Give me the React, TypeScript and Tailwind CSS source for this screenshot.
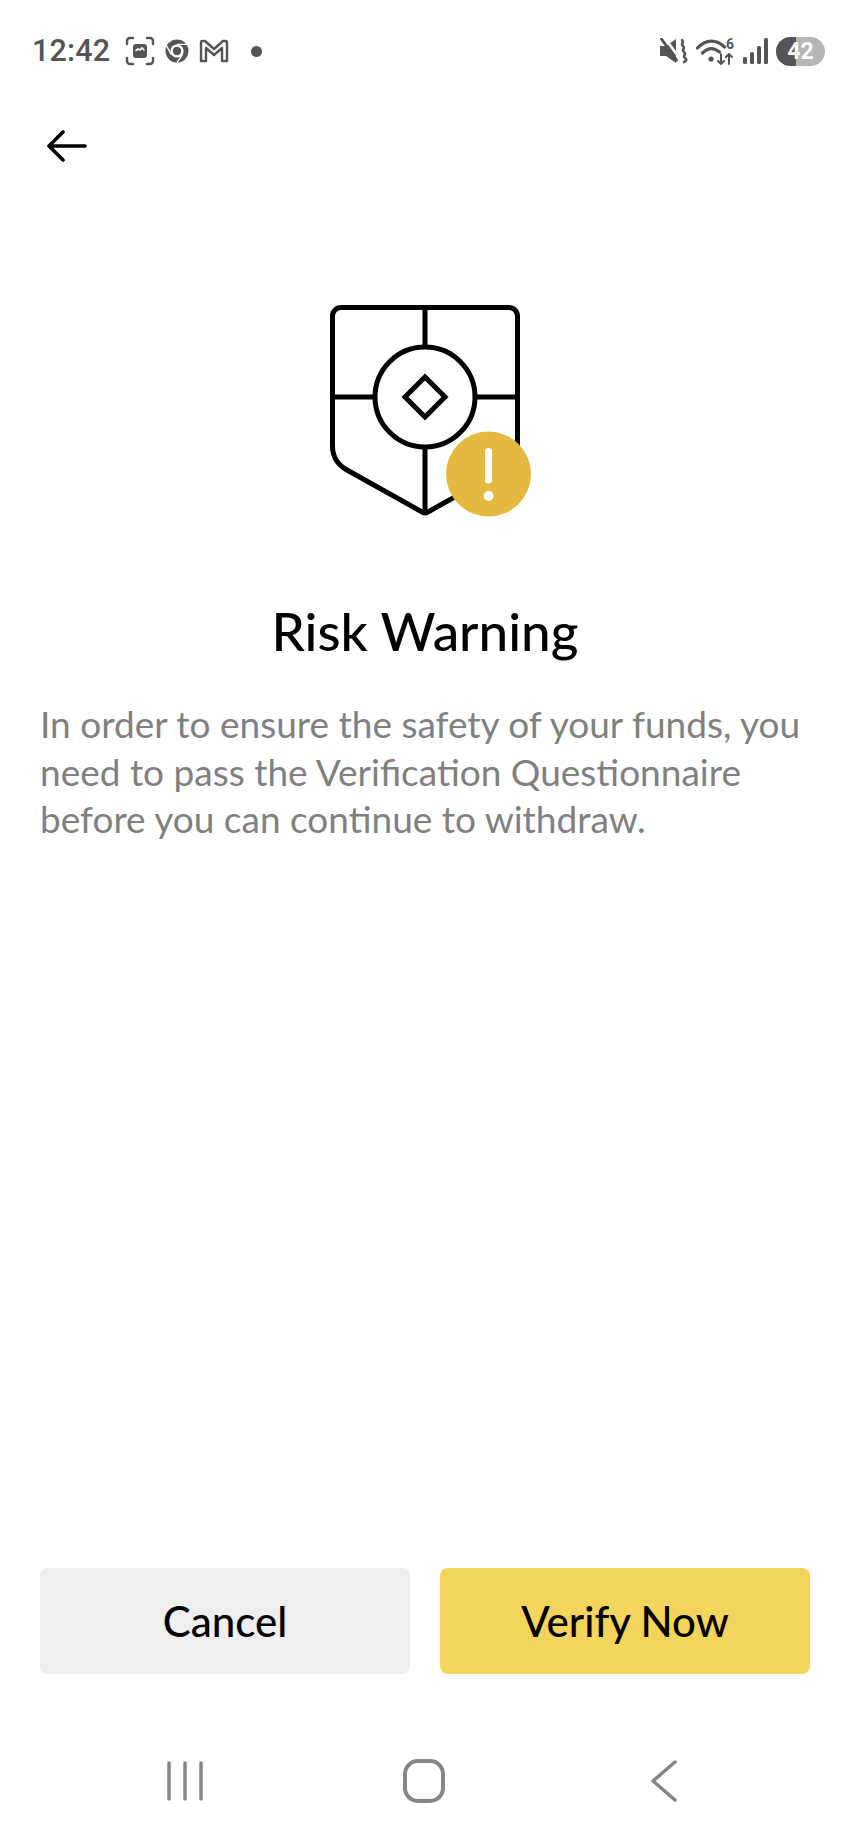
import React from 'react';

const sans = 'font-["Lato","Noto_Sans",sans-serif]';

const StatusBar: React.FC = () => (
  <div className="h-[102px] flex items-center pl-[32px] pr-[25px] text-[#555555] shrink-0">
    <span className='font-["Roboto",sans-serif] font-medium text-[30.500px] leading-none w-[78px] tracking-[0.2px]'>12:42</span>
    {/* screenshot */}
    <svg className="ml-[15px]" width="30" height="30" viewBox="0 0 30 30" fill="none" stroke="#555555" strokeWidth="2.400" strokeLinecap="round">
      <path d="M2 8V5a3 3 0 0 1 3-3h3M22 2h3a3 3 0 0 1 3 3v3M28 22v3a3 3 0 0 1-3 3h-3M8 28H5a3 3 0 0 1-3-3v-3" />
      <rect x="8" y="8" width="14" height="14" rx="3" fill="#555555" stroke="none" />
      <path d="M11 14.500l2-1.500 2 1 2-2 2 2" stroke="#ffffff" strokeWidth="1.600" />
    </svg>
    {/* chrome */}
    <svg className="ml-[10px]" width="24" height="24" viewBox="0 0 24 24">
      <circle cx="12" cy="12" r="11.500" fill="#555555" />
      <circle cx="12" cy="12" r="6.600" fill="#ffffff" />
      <circle cx="12" cy="12" r="4.200" fill="#555555" />
      <path d="M12 5.400h10M6.300 15.300L1.600 7M17.700 15.300L12 23.600" stroke="#ffffff" strokeWidth="1.400" />
    </svg>
    {/* gmail */}
    <svg className="ml-[10px]" width="30" height="24" viewBox="0 0 30 24" fill="none" stroke="#555555" strokeWidth="2.400" strokeLinejoin="round">
      <path d="M2 22V3.500Q2 2 3.500 2H6L15 10 24 2h2.500Q28 2 28 3.500V22h-5V9l-8 7-8-7v13z" />
    </svg>
    <span className="ml-[22px] w-[11px] h-[11px] rounded-full bg-[#555555]" />

    <div className="ml-auto flex items-center">
      {/* muted speaker */}
      <svg width="28" height="26" viewBox="0 0 28 26" fill="none">
        <path d="M0 8h6l10-7v24l-10-7H0z" fill="#555555" />
        <path d="M5 0l15 21" stroke="#ffffff" strokeWidth="2.600" />
        <path d="M1.500 1l15 21" stroke="#555555" strokeWidth="3" strokeLinecap="round" />
        <path d="M22 2c3 2-2 4 1 6s-2 4 1 6-2 4 1 6 0 3-1 4" stroke="#555555" strokeWidth="2.600" strokeLinecap="round" />
      </svg>
      {/* wifi */}
      <div className="relative ml-[8px] w-[38px] h-[28px]">
        <svg width="38" height="28" viewBox="0 0 38 28" fill="none" stroke="#555555" strokeLinecap="round">
          <path d="M1.500 11C10 2 20 2 28.500 10" strokeWidth="3.200" />
          <path d="M6.500 16C12 10.500 18 10.500 23.500 15" strokeWidth="3.200" />
          <circle cx="15" cy="22" r="2.600" fill="#555555" stroke="none" />
          <path d="M25 17v10M22 24l3 3 3-3M33 27V17M30 20l3-3 3 3" strokeWidth="2" />
        </svg>
        <span className='absolute right-0 top-0 font-["Roboto",sans-serif] font-bold text-[14px] leading-[14px] text-[#555555]'>6</span>
      </div>
      {/* signal */}
      <svg className="ml-[9px]" width="25" height="26" viewBox="0 0 25 26" fill="#555555">
        <rect x="0" y="19" width="4" height="7" rx="1.500" />
        <rect x="7" y="14" width="4" height="12" rx="1.500" />
        <rect x="14" y="8" width="4" height="18" rx="1.500" />
        <rect x="21" y="0" width="4" height="26" rx="1.500" />
      </svg>
      {/* battery */}
      <div className="relative ml-[8px] w-[49px] h-[29px] rounded-full overflow-hidden bg-[#b5b5b5] flex items-center justify-center">
        <span className="absolute left-0 top-0 h-full w-[20px] bg-[#555555]" />
        <span className='relative font-["Roboto",sans-serif] font-bold text-[23px] leading-none text-white'>42</span>
      </div>
    </div>
  </div>
);

const ShieldIllustration: React.FC = () => (
  <svg width="230" height="220" viewBox="0 0 230 220" fill="none" className="mx-auto">
    <g stroke="#000000" strokeWidth="5" strokeLinejoin="round">
      <path d="M31 7.500H199a8.500 8.500 0 0 1 8.500 8.500V162L117 212.500a5 5 0 0 1-4 0L37 170Q22.500 162 22.500 146V16A8.500 8.500 0 0 1 31 7.500z" />
      <path d="M115 7.500V47M115 147V212M22.500 97H65M165 97H207.500" />
      <circle cx="115" cy="97" r="50" />
      <path d="M115 77L135 97 115 117 95 97z" strokeLinejoin="miter" />
    </g>
    <circle cx="178.500" cy="174" r="42.500" fill="#e3b93f" />
    <path d="M178.500 151.500V180" stroke="#ffffff" strokeWidth="7" strokeLinecap="round" />
    <circle cx="178.500" cy="196" r="5" fill="#ffffff" />
  </svg>
);

export default function App() {
  return (
    <div className={`w-[850px] h-[1842px] bg-white flex flex-col ${sans}`}>
      <StatusBar />

      <div className="h-[86px] pl-[47px] pt-[28px] shrink-0">
        <svg width="40" height="32" viewBox="0 0 40 32" fill="none" stroke="#000000" strokeWidth="3.600" strokeLinecap="round" strokeLinejoin="round">
          <path d="M2 16H38M16 2L2 16 16 30" />
        </svg>
      </div>

      <div className="mt-[112px] shrink-0">
        <ShieldIllustration />
      </div>

      <h1 className="mt-[82px] text-center text-[53px] leading-[58px] font-medium text-black">Risk Warning</h1>

      <p className="mt-[40px] px-[40px] text-[37px] leading-[47.500px] text-[#808080] whitespace-nowrap">
        In order to ensure the safety of your funds, you<br />
        need to pass the Verification Questionnaire<br />
        before you can continue to withdraw.
      </p>

      <div className="mt-auto px-[40px] flex gap-[30px] shrink-0">
        <button className="flex-1 h-[106px] rounded-[8px] bg-[#eeeeee] text-[42px] font-medium text-black">Cancel</button>
        <button className="flex-1 h-[106px] rounded-[8px] bg-[#f4d55b] text-[42px] font-medium text-black">Verify Now</button>
      </div>

      <div className="h-[168px] shrink-0">
        <div className="flex items-center pt-[85px] pl-[167px]">
          <svg width="36" height="40" viewBox="0 0 36 40" stroke="#858585" strokeWidth="3.500" strokeLinecap="round">
            <path d="M2 2V38M18 2V38M34 2V38" />
          </svg>
          <svg className="ml-[200px]" width="42" height="44" viewBox="0 0 42 44" fill="none" stroke="#858585" strokeWidth="4">
            <rect x="2" y="2" width="38" height="40" rx="13" />
          </svg>
          <svg className="ml-[206px]" width="26" height="42" viewBox="0 0 26 42" fill="none" stroke="#858585" strokeWidth="3.500" strokeLinecap="round" strokeLinejoin="round">
            <path d="M24 2L2 21 24 40" />
          </svg>
        </div>
      </div>
    </div>
  );
}
